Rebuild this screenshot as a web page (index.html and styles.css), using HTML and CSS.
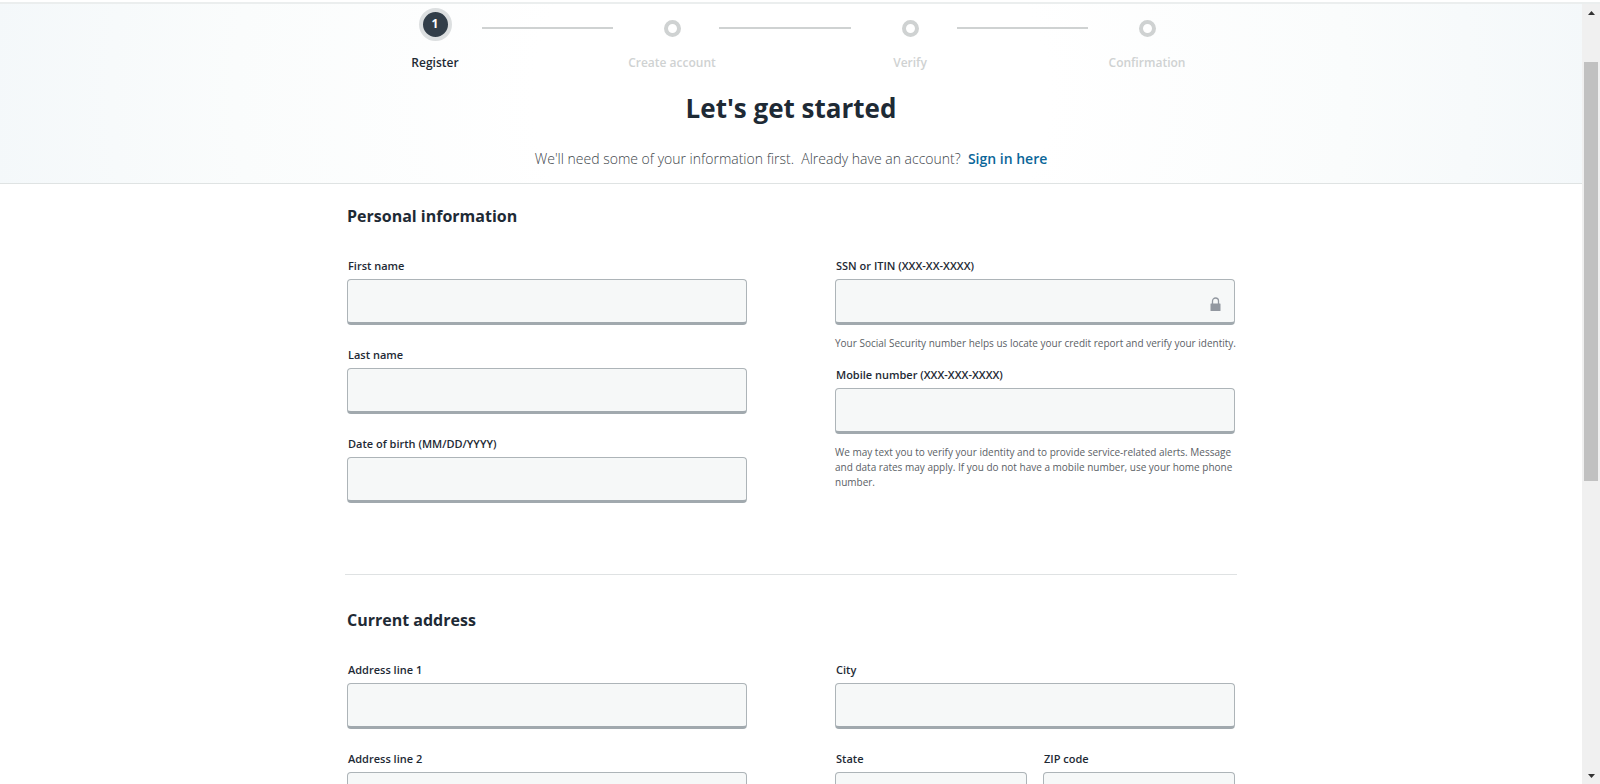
FILE: index.html
```html
<!DOCTYPE html>
<html lang="en">
<head>
<meta charset="utf-8">
<title>Register</title>
<link rel="stylesheet" href="styles.css">
</head>
<body>
<div class="window">
  <div class="page">
    <header class="hero">
      <ol class="steps">
        <li class="step step-active"><span class="dot">1</span><span class="step-label">Register</span></li>
        <li class="connector" aria-hidden="true"></li>
        <li class="step"><span class="dot"></span><span class="step-label">Create account</span></li>
        <li class="connector" aria-hidden="true"></li>
        <li class="step"><span class="dot"></span><span class="step-label">Verify</span></li>
        <li class="connector" aria-hidden="true"></li>
        <li class="step"><span class="dot"></span><span class="step-label">Confirmation</span></li>
      </ol>
      <h1 class="title">Let's get started</h1>
      <p class="intro">We'll need some of your information first.&nbsp; Already have an account?&nbsp; <a class="link" href="#signin">Sign in here</a></p>
    </header>
    <form class="form">
      <section class="section">
        <h2 class="section-title">Personal information</h2>
        <div class="columns">
          <div class="column">
            <div class="field"><label class="label" for="first">First name</label><input class="input" id="first" type="text"></div>
            <div class="field"><label class="label" for="last">Last name</label><input class="input" id="last" type="text"></div>
            <div class="field"><label class="label" for="dob">Date of birth (MM/DD/YYYY)</label><input class="input" id="dob" type="text"></div>
          </div>
          <div class="column column-hints">
            <div class="field">
              <label class="label" for="ssn">SSN or ITIN (XXX-XX-XXXX)</label>
              <div class="input-wrap">
                <input class="input" id="ssn" type="text">
                <svg class="lock" viewBox="0 0 10 14" aria-hidden="true"><path d="M2 7V4a3 3 0 0 1 6 0v3" fill="none" stroke="#9298a0" stroke-width="1.3"/><rect y="6.5" width="10" height="7.5" rx=".5" fill="#9298a0"/></svg>
              </div>
              <p class="hint">Your Social Security number helps us locate your credit report and verify your identity.</p>
            </div>
            <div class="field">
              <label class="label" for="mobile">Mobile number (XXX-XXX-XXXX)</label>
              <input class="input" id="mobile" type="text">
              <p class="hint">We may text you to verify your identity and to provide service-related alerts. Message and data rates may apply. If you do not have a mobile number, use your home phone number.</p>
            </div>
          </div>
        </div>
      </section>
      <section class="section section-next">
        <h2 class="section-title">Current address</h2>
        <div class="columns">
          <div class="column">
            <div class="field"><label class="label" for="line1">Address line 1</label><input class="input" id="line1" type="text"></div>
            <div class="field"><label class="label" for="line2">Address line 2</label><input class="input" id="line2" type="text"></div>
          </div>
          <div class="column">
            <div class="field"><label class="label" for="city">City</label><input class="input" id="city" type="text"></div>
            <div class="pair">
              <div class="field"><label class="label" for="state">State</label><input class="input" id="state" type="text"></div>
              <div class="field"><label class="label" for="zip">ZIP code</label><input class="input" id="zip" type="text"></div>
            </div>
          </div>
        </div>
      </section>
    </form>
  </div>
  <div class="scrollbar">
    <button class="arrow" type="button" aria-label="Scroll up"><svg width="7" height="4" viewBox="0 0 7 4"><path d="M0 4 3.500 0 7 4z" fill="#333"/></svg></button>
    <div class="track"><div class="thumb"></div></div>
    <button class="arrow" type="button" aria-label="Scroll down"><svg width="7" height="4" viewBox="0 0 7 4"><path d="M0 0h7L3.500 4z" fill="#333"/></svg></button>
  </div>
</div>
</body>
</html>
```
FILE: styles.css
```css
* { box-sizing: border-box; }

body {
  margin: 0;
  font-family: "Open Sans", "Noto Sans", sans-serif;
  color: #1e2a35;
  background: #fff;
}

h1, h2, p, ol { margin: 0; padding: 0; }

.window {
  display: flex;
  height: 100vh;
  padding-top: 2px;
  overflow: hidden;
}

.page {
  flex: 1;
  min-width: 0;
  overflow: hidden;
}

.hero {
  padding: 4px 16px 14px;
  border-top: 2px solid #ebeeee;
  border-bottom: 1px solid #dfe3e3;
  background: radial-gradient(ellipse 54% 400% at 50% 50%, #fff 30%, #fafcfc 65%, #f4f8fa 94%);
  text-align: center;
}

.steps {
  display: grid;
  grid-template-columns: 106fr 131fr 106fr 132fr 106fr 131fr 106fr;
  max-width: 830px;
  margin: 0 auto;
  padding-right: 12px;
  list-style: none;
}

.step {
  display: flex;
  flex-direction: column;
  align-items: center;
  justify-content: space-between;
  height: 64px;
  padding: 12px 0 0 12px;
  color: #cfd2d2;
}

.step-active {
  padding-top: 0;
  color: #1e2a35;
}

.dot {
  width: 17px;
  height: 17px;
  border: 4px solid #cfd2d2;
  border-radius: 50%;
  background: #fff;
}

.step-active .dot {
  width: 33px;
  height: 33px;
  border: 4px solid #dcdfe0;
  background: #323e49;
  color: #fff;
  font-size: 12px;
  font-weight: 700;
  line-height: 24px;
}

.step-label {
  font-size: 12px;
  font-weight: 600;
  line-height: 18px;
  white-space: nowrap;
}

.connector {
  height: 2px;
  margin-top: 19px;
  background: #cfd2d2;
}

.title {
  margin-top: 18px;
  font-size: 26px;
  font-weight: 700;
  line-height: 36px;
}

.intro {
  margin-top: 23px;
  color: #40464b;
  font-size: 14px;
  font-weight: 300;
  line-height: 20px;
}

.link {
  color: #0a6699;
  font-weight: 600;
  text-decoration: none;
}

.form {
  max-width: 892px;
  margin: 0 auto;
}

.section { padding: 20px 2px 71px; }

.section-next {
  padding-top: 33px;
  border-top: 1px solid #dfe2e3;
}

.section-title {
  font-size: 16px;
  font-weight: 700;
  line-height: 24px;
}

.columns {
  display: grid;
  grid-template-columns: 1fr 1fr;
  gap: 88px;
  margin-top: 29px;
}

.column {
  display: flex;
  flex-direction: column;
  gap: 21px;
}

.column-hints { gap: 15px; }

.field {
  display: flex;
  flex-direction: column;
}

.label {
  padding-left: 1px;
  margin-bottom: 4px;
  font-size: 11px;
  font-weight: 600;
  line-height: 18px;
}

.input {
  width: 100%;
  height: 46px;
  padding: 0 12px;
  border: 1px solid #adb4b8;
  border-bottom: 3px solid #a1a9ae;
  border-radius: 4px;
  background: #f6f8f8;
  color: inherit;
  font: inherit;
}

.input-wrap { position: relative; }

.lock {
  position: absolute;
  right: 14px;
  bottom: 14px;
  width: 11px;
  height: 14px;
}

.hint {
  margin: 11px -12px 0 0;
  color: #5b6166;
  font-size: 10px;
  line-height: 15px;
}

.pair {
  display: grid;
  grid-template-columns: 1fr 1fr;
  gap: 16px;
}

.scrollbar {
  display: flex;
  flex-direction: column;
  width: 18px;
  border-top: 2px solid #ebeeee;
  background: #f0f0f0;
}

.arrow {
  display: grid;
  place-items: center;
  height: 17px;
  padding: 0;
  border: 0;
  background: none;
}

.track {
  flex: 1;
  padding: 41px 2px 0;
}

.thumb {
  height: calc(59% + 3px);
  background: #c1c1c1;
}
```
